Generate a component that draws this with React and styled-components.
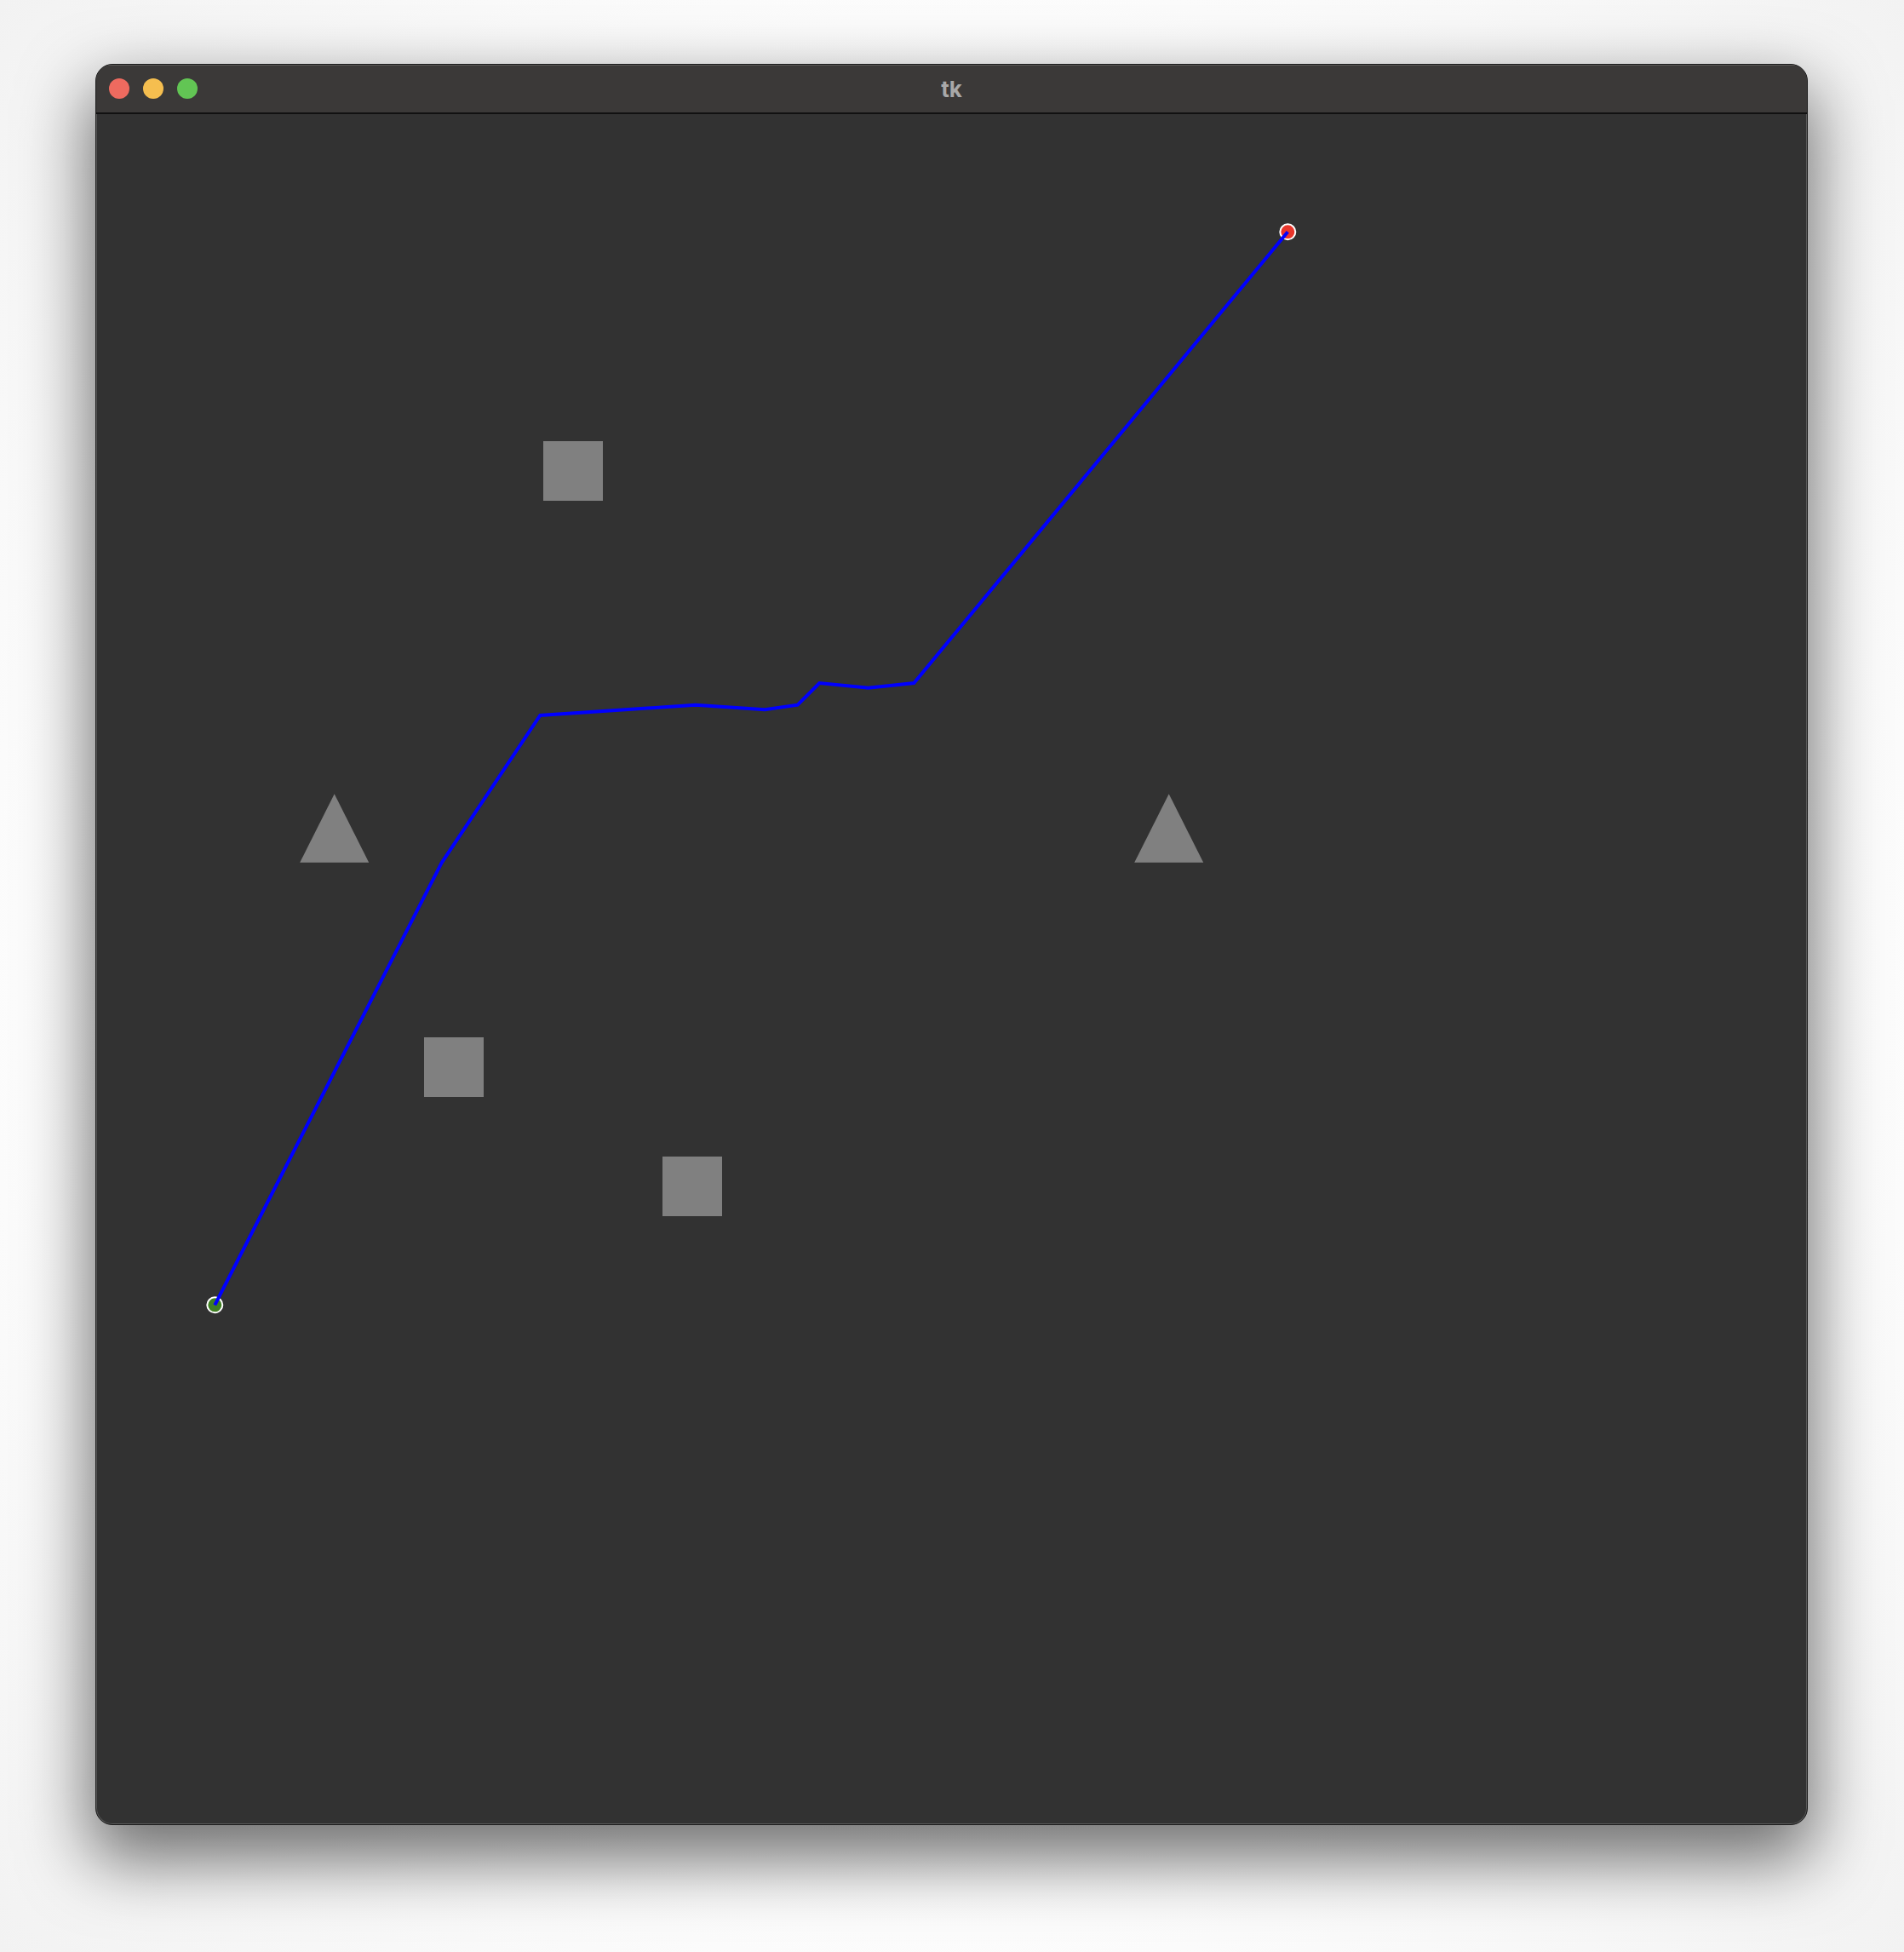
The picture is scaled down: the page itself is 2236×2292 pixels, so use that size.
import React from 'react'
import styled, { createGlobalStyle } from 'styled-components'

const squares = [
    { x: 525, y: 384 },
    { x: 385, y: 1084 },
    { x: 665, y: 1224 },
]

const triangles = [
    { cx: 279.7, top: 798.3, bottom: 878.7, half: 40.5 },
    { cx: 1259.7, top: 798.3, bottom: 878.7, half: 40.5 },
]

const route = [
    [139.3, 1398.3],
    [405.8, 878.8],
    [521.3, 706],
    [703.7, 693.7],
    [785.3, 699.3],
    [823.7, 693.7],
    [849.3, 668],
    [906.3, 673.7],
    [960.3, 668],
    [1399.3, 138.3],
]

export default function App() {
    return (
        <Page>
            <GlobalStyle />
            <Window>
                <TitleBar>
                    <Lights>
                        <Light color="#ee6a5f" />
                        <Light color="#f5be4f" />
                        <Light color="#62c554" />
                    </Lights>
                    <Title>tk</Title>
                </TitleBar>
                <Canvas>
                    <svg width="2009" height="2008" viewBox="0 0 2009 2008">
                        {squares.map((s, i) => (
                            <rect key={i} x={s.x} y={s.y} width="70" height="70" fill="#808080" />
                        ))}
                        {triangles.map((t, i) => (
                            <polygon
                                key={i}
                                points={`${t.cx},${t.top} ${t.cx + t.half},${t.bottom} ${t.cx - t.half},${t.bottom}`}
                                fill="#808080"
                            />
                        ))}
                        <circle cx="1399.3" cy="138.3" r="9" fill="#e8352b" stroke="#ffffff" strokeWidth="2" />
                        <circle cx="139.3" cy="1398.3" r="9" fill="#3f7f22" stroke="#ffffff" strokeWidth="2" />
                        <polyline
                            points={route.map(p => p.join(',')).join(' ')}
                            fill="none"
                            stroke="#0000ff"
                            strokeWidth="4"
                            strokeLinejoin="miter"
                        />
                    </svg>
                </Canvas>
            </Window>
        </Page>
    )
}

const GlobalStyle = createGlobalStyle`
    body {
        margin: 0px;
        background-color: #ffffff;
        font-family: "Inter", "Liberation Sans", sans-serif;
    }
`;

const Page = styled.div`
    min-height: 2292px;
    padding: 75px 0px 0px 112px;
    box-sizing: border-box;
    background: radial-gradient(ellipse at center, #ffffff 60%, #f2f2f2 100%);
    overflow: hidden;
`;

const Window = styled.div`
    width: 2011px;
    box-sizing: border-box;
    border: 1px solid #1a1a1a;
    border-radius: 20px;
    overflow: hidden;
    background-color: #323232;
    box-shadow: 0px 34px 80px 8px rgba(0, 0, 0, 0.55), inset 0px 0px 0px 1px #5a5a5a;
`;

const TitleBar = styled.div`
    position: relative;
    height: 56px;
    display: flex;
    align-items: center;
    justify-content: center;
    background-color: #3b3938;
    border-bottom: 2px solid #111111;
    box-shadow: inset 0px 1px 0px #5c5a58;
`;

const Lights = styled.div`
    position: absolute;
    left: 15px;
    top: 16px;
    display: flex;
    gap: 16px;
`;

const Light = styled.span`
    width: 24px;
    height: 24px;
    border-radius: 50%;
    background-color: ${props => props.color};
`;

const Title = styled.span`
    color: #a8a8a8;
    font-size: 26px;
    font-weight: bold;
`;

const Canvas = styled.div`
    height: 2008px;
    svg {
        display: block;
    }
`;
